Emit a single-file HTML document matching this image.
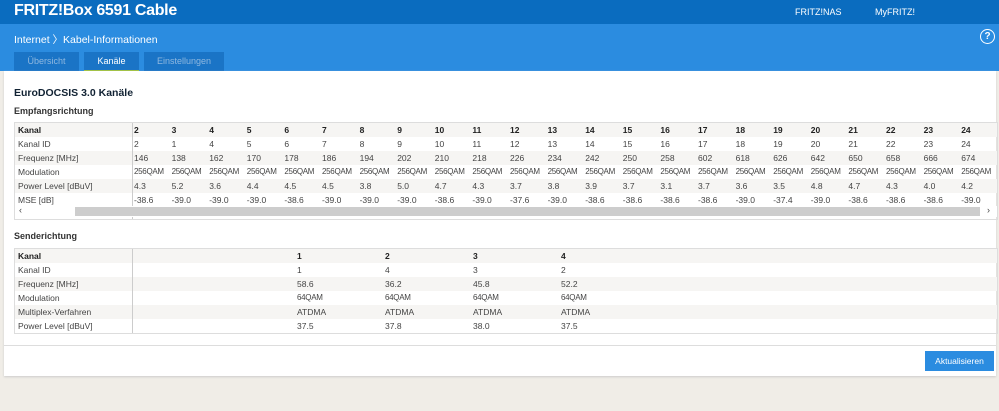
<!DOCTYPE html><html><head><style>
body{margin:0;width:999px;height:411px;background:#f0ede7;font-family:"Liberation Sans",sans-serif;overflow:hidden;position:relative}
.top{position:absolute;left:0;top:0;width:999px;height:24px;background:#0a6cbf}
.top .t{position:absolute;left:14px;top:2px;color:#fff;font-weight:bold;font-size:16px;letter-spacing:-0.3px}
.top .l{position:absolute;top:7px;color:#fff;font-size:9px}
.band{position:absolute;left:0;top:24px;width:999px;height:47px;background:#2b8ce0}
.crumb{position:absolute;left:14px;top:8px;color:#fff;font-size:10.5px}
.help{position:absolute;left:980px;top:5px;width:13px;height:13px;border:1.5px solid #fff;border-radius:50%;color:#fff;font-size:10px;font-weight:bold;text-align:center;line-height:13px}
.tab{position:absolute;top:28px;height:19px;background:#1a74c6;color:#8fb8e0;font-size:9px;text-align:center;line-height:18px}
.tab.a{color:#fff;border-bottom:1px solid #9fc23c;height:18px}
.main{position:absolute;left:4px;top:71px;width:992px;height:305px;background:#fff;box-shadow:0 1px 2px #ccc}
h1{position:absolute;left:10px;top:16px;margin:0;font-size:10.5px;color:#123;font-weight:bold}
h2{position:absolute;margin:0;font-size:9px;color:#333;font-weight:bold}
.tbl{position:absolute;left:10px;width:982px;border:1px solid #ddd;font-size:8.5px;color:#444}
.r{height:14px;line-height:14px;position:relative}
.r:nth-child(odd){background:#f6f5f3}
.r span{position:absolute}
.r .lab{left:3px}
.m span{font-size:8px;letter-spacing:-0.3px}
.m span.lab{font-size:8.5px;letter-spacing:0}
.sep{position:absolute;left:117px;top:0;bottom:0;border-left:1px solid #ccc}
.b{font-weight:bold;color:#222}
</style></head><body>
<div class="top"><div class="t">FRITZ!Box 6591 Cable</div><div class="l" style="left:795px">FRITZ!NAS</div><div class="l" style="left:875px">MyFRITZ!</div></div>
<div class="band"><div class="crumb">Internet 〉Kabel-Informationen</div><div class="help">?</div>
<div class="tab" style="left:14px;width:65px">Übersicht</div>
<div class="tab a" style="left:84px;width:55px">Kanäle</div>
<div class="tab" style="left:144px;width:80px">Einstellungen</div></div>
<div class="main">
<h1>EuroDOCSIS 3.0 Kanäle</h1>
<h2 style="left:10px;top:35px">Empfangsrichtung</h2>
<div class="tbl" style="top:51px;height:96px" id="rx"></div>
<h2 style="left:10px;top:160px">Senderichtung</h2>
<div class="tbl" style="top:177px;height:84px" id="tx"></div>
<div style="position:absolute;left:0;top:274px;width:992px;border-top:1px solid #ddd"></div>
<div style="position:absolute;left:921px;top:280px;width:69px;height:20px;background:#2b8ce0;color:#fff;font-size:8.5px;text-align:center;line-height:20px">Aktualisieren</div>
</div>
<script>
function build(id,labels,data,xs){let h='';labels.forEach((l,i)=>{h+='<div class="r'+(i==0?' b':'')+(l=='Modulation'?' m':'')+'"><span class="lab">'+l+'</span>';data[i].forEach((v,j)=>{h+='<span style="left:'+xs[j]+'px">'+v+'</span>'});h+='</div>'});h+='<div class="sep"></div>';return h}
let xs=[];for(let i=0;i<23;i++)xs.push(119+i*37.6);
let ch=[2,3,4,5,6,7,8,9,10,11,12,13,14,15,16,17,18,19,20,21,22,23,24];
let id=[2,1,4,5,6,7,8,9,10,11,12,13,14,15,16,17,18,19,20,21,22,23,24];
let fr=[146,138,162,170,178,186,194,202,210,218,226,234,242,250,258,602,618,626,642,650,658,666,674];
let mo=ch.map(()=>'256QAM');
let pw=['4.3','5.2','3.6','4.4','4.5','4.5','3.8','5.0','4.7','4.3','3.7','3.8','3.9','3.7','3.1','3.7','3.6','3.5','4.8','4.7','4.3','4.0','4.2'];
let ms=['-38.6','-39.0','-39.0','-39.0','-38.6','-39.0','-39.0','-39.0','-38.6','-39.0','-37.6','-39.0','-38.6','-38.6','-38.6','-38.6','-39.0','-37.4','-39.0','-38.6','-38.6','-38.6','-39.0'];
document.getElementById('rx').innerHTML=build('rx',['Kanal','Kanal ID','Frequenz [MHz]','Modulation','Power Level [dBuV]','MSE [dB]'],[ch,id,fr,mo,pw,ms],xs)+'<div style="position:absolute;left:0;top:83px;width:982px;height:11px;background:#fff"><div style="position:absolute;left:60px;top:1px;width:905px;height:9px;background:#cdcdcd"></div><span style="position:absolute;left:4px;top:-1px;font-size:9px">‹</span><span style="position:absolute;left:972px;top:-1px;font-size:9px">›</span></div>';
document.getElementById('tx').innerHTML=build('tx',['Kanal','Kanal ID','Frequenz [MHz]','Modulation','Multiplex-Verfahren','Power Level [dBuV]'],[[1,2,3,4],[1,4,3,2],['58.6','36.2','45.8','52.2'],['64QAM','64QAM','64QAM','64QAM'],['ATDMA','ATDMA','ATDMA','ATDMA'],['37.5','37.8','38.0','37.5']],[282,370,458,546]);
</script>
</body></html>
